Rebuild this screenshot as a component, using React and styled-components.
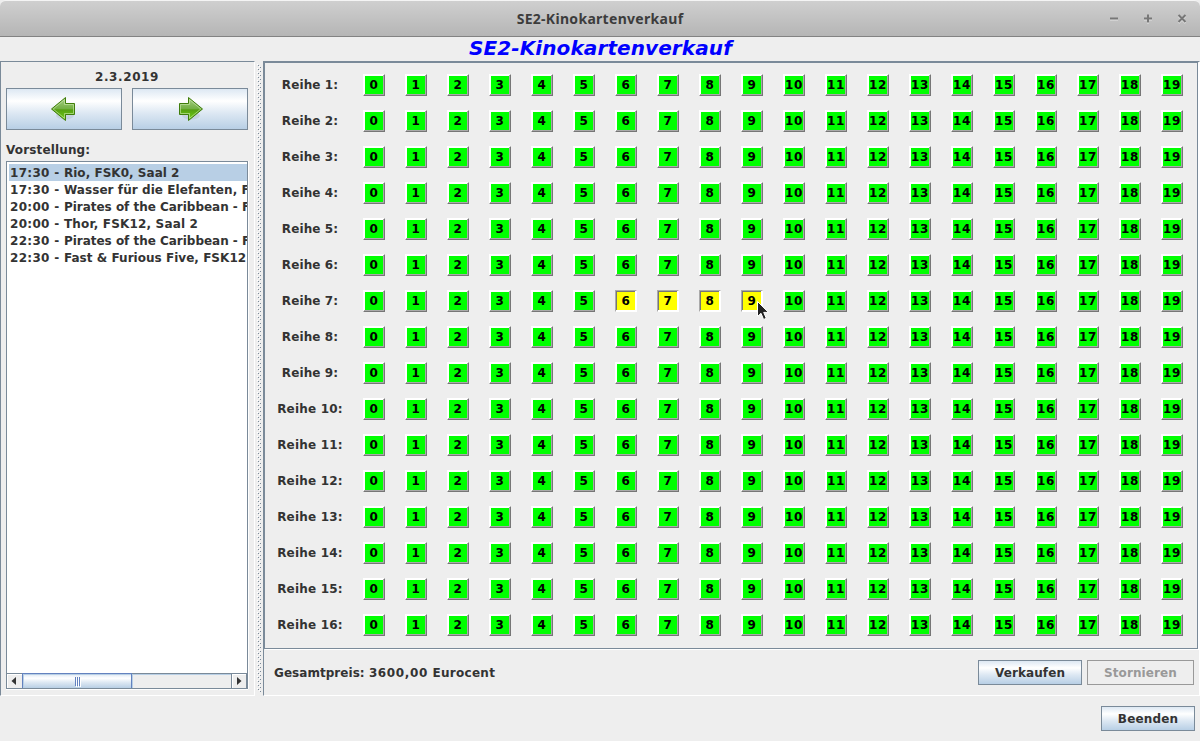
import React from 'react';
import styled, { createGlobalStyle, css } from 'styled-components';

const LINE = '#7a8a99';
const metal = 'linear-gradient(#dde8f3 0%, #ffffff 30%, #dde8f3 60%, #b8cfe5 100%)';
const dot = (color) => `conic-gradient(from 0deg at 1px 1px, transparent 75%, ${color} 0)`;

const Global = createGlobalStyle`
  * { box-sizing: border-box; }
  body {
    margin: 0;
    background: #eee;
    color: #333;
    font: bold 12px/14px "DejaVu Sans", Verdana, sans-serif;
    cursor: default;
  }
`;

const Window = styled.div`
  width: 1200px;
  height: 741px;
  display: flex;
  flex-direction: column;
  overflow: hidden;
  background: #eee;
`;

const TitleBar = styled.header`
  height: 37px;
  flex: none;
  display: grid;
  grid-template-columns: 110px 1fr 110px;
  align-items: center;
  background: linear-gradient(#cfcfcf, #b5b5b5);
  border-top: 1px solid #f4f4f4;
  border-bottom: 1px solid #828282;
  border-radius: 6px 6px 0 0;
`;

const WindowName = styled.div`
  grid-column: 2;
  text-align: center;
  font: bold 14px/20px "Noto Sans", "Open Sans", sans-serif;
  letter-spacing: 0.3px;
  color: #3c3c3c;
`;

const WindowControls = styled.div`
  display: flex;
  justify-content: flex-end;
  gap: 22px;
  padding-right: 12px;
`;

const Heading = styled.h1`
  margin: 0;
  height: 24px;
  flex: none;
  padding-left: 1px;
  text-align: center;
  font-size: 20px;
  line-height: 22px;
  letter-spacing: 0.1px;
  font-style: italic;
  color: #00f;
`;

const Split = styled.main`
  height: 635px;
  flex: none;
  display: grid;
  grid-template-columns: 255px 8px 937px;
`;

const SidePanel = styled.section`
  display: flex;
  flex-direction: column;
  border: 1px solid ${LINE};
  border-right-color: #fff;
  border-bottom-color: #fff;
  padding: 8px 6px 5px 5px;
`;

const DateLabel = styled.div`
  height: 18px;
  text-align: center;
  letter-spacing: 0.6px;
`;

const DayButtons = styled.div`
  display: grid;
  grid-template-columns: 116px 116px;
  gap: 10px;
`;

const Button = styled.button`
  display: flex;
  align-items: center;
  justify-content: center;
  width: ${(p) => p.$w}px;
  height: ${(p) => p.$h}px;
  padding: 0;
  font: inherit;
  letter-spacing: ${(p) => p.$track || 0}px;
  color: #333;
  background: ${metal};
  border: 1px solid ${LINE};
  &:disabled {
    color: #999;
    background: #eee;
    border-color: #999;
  }
`;

const ListLabel = styled.div`
  padding: 13px 0 4px;
  letter-spacing: 0.15px;
`;

const ListBox = styled.div`
  width: 242px;
  height: 528px;
  display: flex;
  flex-direction: column;
  border: 1px solid ${LINE};
  box-shadow: 0 1px #fff, 1px 0 #fff;
`;

const Shows = styled.ul`
  flex: 1;
  margin: 0;
  padding: 2px 0 0 2px;
  list-style: none;
  overflow: hidden;
  background: #fff;
`;

const Show = styled.li`
  height: 17px;
  padding-left: 1px;
  line-height: 19px;
  white-space: pre;
  letter-spacing: 0.3px;
  background: ${(p) => (p.$selected ? '#b8cfe5' : 'transparent')};
`;

const Tracked = styled.span`
  letter-spacing: ${(p) => p.$track}px;
`;

const ScrollBar = styled.div`
  height: 15px;
  flex: none;
  display: grid;
  grid-template-columns: 15px 110px 1fr 16px;
  border-top: 1px solid ${LINE};
  background: #eee;
`;

const ScrollArrow = styled.div`
  display: flex;
  align-items: center;
  justify-content: center;
  padding-right: ${(p) => (p.$end ? 0 : 2)}px;
  border-left: ${(p) => (p.$end ? `1px solid ${LINE}` : 'none')};
  border-right: ${(p) => (p.$end ? `1px solid ${LINE}` : 'none')};
  box-shadow: inset 1px 1px #fff;
`;

const Thumb = styled.div`
  display: flex;
  align-items: center;
  justify-content: center;
  gap: 1px;
  border: 1px solid #6382bf;
  border-bottom-width: 0;
  box-shadow: inset 1px 1px #b8cfe5;
  background: ${metal};
  margin-top: -1px;
`;

const Grip = styled.i`
  width: 1px;
  height: 9px;
  background: #6382bf;
  box-shadow: 1px 1px #fff;
`;

const Track = styled.div`
  box-shadow: inset 1px 1px #b8cfe5;
`;

const Divider = styled.div`
  margin: 3px 0 4px;
  padding: 0 2px;
  background: ${dot(LINE)} 3px 1px / 4px 4px, ${dot(LINE)} 1px 3px / 4px 4px,
    ${dot('#fff')} 2px 0 / 4px 4px, ${dot('#fff')} 0 2px / 4px 4px;
  background-clip: content-box;
`;

const SalePanel = styled.section`
  display: flex;
  flex-direction: column;
  border: 1px solid ${LINE};
  border-right-color: #fff;
  border-bottom-color: #fff;
`;

const Hall = styled.div`
  height: 587px;
  flex: none;
  width: 934px;
  display: flex;
  flex-direction: column;
  gap: 14px;
  padding: 11px 0 0 12px;
  border: 1px solid ${LINE};
  box-shadow: 1px 1px #fff;
`;

const Row = styled.div`
  display: grid;
  grid-template-columns: 66px repeat(20, 22px);
  column-gap: 20px;
  height: 22px;
  align-items: center;
`;

const RowLabel = styled.span`
  text-align: center;
  white-space: nowrap;
  letter-spacing: ${(p) => p.$track}px;
`;

const raised = css`
  border-color: #fff #767676 #767676 #fff;
  box-shadow: inset -1px -1px #aaa, inset 1px 1px #fff;
`;
const lowered = css`
  border-color: #aaa #fff #fff #aaa;
  box-shadow: inset -1px -1px #fff, inset 1px 1px #767676;
`;

const Seat = styled.button`
  width: 22px;
  height: 22px;
  padding: 0;
  display: flex;
  align-items: center;
  justify-content: center;
  font: inherit;
  letter-spacing: 0.6px;
  color: #000;
  background: ${(p) => (p.$chosen ? '#ff0' : '#0f0')};
  border: 1px solid;
  ${(p) => (p.$chosen ? lowered : raised)}
`;

const SaleBar = styled.div`
  flex: 1;
  display: flex;
  align-items: center;
  gap: 5px;
  padding: 1px 5px 0 10px;
`;

const Price = styled.div`
  flex: 1;
  letter-spacing: 0.04px;
`;

const Footer = styled.footer`
  flex: 1;
  display: flex;
  justify-content: flex-end;
  align-items: center;
  padding: 0 5px 0 0;
`;

const Pointer = styled.svg`
  position: absolute;
  left: 756px;
  top: 300px;
  pointer-events: none;
`;

const Arrow = ({ flip }) => (
  <svg width="28" height="28" viewBox="0 0 28 28">
    <defs>
      <linearGradient id="leaf" x1="0" y1="0" x2="0" y2="1">
        <stop offset="0" stopColor="#a9cf8a" />
        <stop offset=".48" stopColor="#74b044" />
        <stop offset=".54" stopColor="#55a010" />
        <stop offset="1" stopColor="#73d216" />
      </linearGradient>
    </defs>
    <ellipse cx="15" cy="20.5" rx="9" ry="4" fill="#000" opacity=".07" />
    <g transform={flip ? 'matrix(-1 0 0 1 28 0)' : undefined}>
      <path d="M1.5 14 L15.5 2.5 V8.5 H24.5 V19.5 H15.5 V25.5 Z" fill="url(#leaf)" stroke="#3f7d0a" strokeLinejoin="round" />
      <path d="M3.2 14 L14.5 4.7 V9.5 H23.5 V18.5 H14.5 V23.3 Z" fill="none" stroke="#c5e6a5" strokeOpacity=".65" />
    </g>
  </svg>
);

const shows = [
  ['17:30', 'Rio, FSK0, Saal 2', 0.03],
  ['17:30', 'Wasser für die Elefanten, F', 0.07],
  ['20:00', 'Pirates of the Caribbean - F', -0.02],
  ['20:00', 'Thor, FSK12, Saal 2', 0.17],
  ['22:30', 'Pirates of the Caribbean - F', -0.02],
  ['22:30', 'Fast & Furious Five, FSK12', 0.03],
];

const chosen = (row, seat) => row === 7 && seat >= 6 && seat <= 9;

export default function App() {
  return (
    <Window>
      <Global />
      <TitleBar>
        <WindowName>SE2-Kinokartenverkauf</WindowName>
        <WindowControls>
          {['M2 6.5H10', 'M2 6.5H10M6 2.5V10.5', 'M2.5 3L9.5 10M9.5 3L2.5 10'].map((d) => (
            <svg key={d} width="12" height="13" viewBox="0 0 12 13" fill="none" strokeWidth="2">
              <path d={d} stroke="#e2e2e2" transform="translate(0 1)" />
              <path d={d} stroke="#777" />
            </svg>
          ))}
        </WindowControls>
      </TitleBar>
      <Heading>SE2-Kinokartenverkauf</Heading>
      <Split>
        <SidePanel>
          <DateLabel>2.3.2019</DateLabel>
          <DayButtons>
            <Button $w={116} $h={42}><Arrow /></Button>
            <Button $w={116} $h={42}><Arrow flip /></Button>
          </DayButtons>
          <ListLabel>Vorstellung:</ListLabel>
          <ListBox>
            <Shows>
              {shows.map(([time, film, track], i) => (
                <Show key={i} $selected={i === 0}>
                  {`${time} - `}
                  <Tracked $track={track}>{film}</Tracked>
                </Show>
              ))}
            </Shows>
            <ScrollBar>
              <ScrollArrow>
                <svg width="5" height="8"><path d="M5 0V8L0.5 4Z" fill="#333" /></svg>
              </ScrollArrow>
              <Thumb><Grip /><Grip /><Grip /></Thumb>
              <Track />
              <ScrollArrow $end>
                <svg width="5" height="8"><path d="M0 0V8L4.5 4Z" fill="#333" /></svg>
              </ScrollArrow>
            </ScrollBar>
          </ListBox>
        </SidePanel>
        <Divider />
        <SalePanel>
          <Hall>
            {Array.from({ length: 16 }, (_, r) => (
              <Row key={r}>
                <RowLabel $track={r < 9 ? 0.1 : 0.2}>{`Reihe ${r + 1}:`}</RowLabel>
                {Array.from({ length: 20 }, (_, s) => (
                  <Seat key={s} $chosen={chosen(r + 1, s)}>{s}</Seat>
                ))}
              </Row>
            ))}
          </Hall>
          <SaleBar>
            <Price>
              {'Gesamtpreis: '}
              <Tracked $track={0.65}>3600,00</Tracked>
              <Tracked $track={0.27}>{' Eurocent'}</Tracked>
            </Price>
            <Button $w={104} $h={25} $track={0.1}>Verkaufen</Button>
            <Button $w={107} $h={25} $track={0.1} disabled>Stornieren</Button>
          </SaleBar>
        </SalePanel>
      </Split>
      <Footer>
        <Button $w={94} $h={25} $track={0.15}>Beenden</Button>
      </Footer>
      <Pointer width="14" height="22" viewBox="0 0 14 22">
        <path d="M1.5 1.5V16.5L5 13.3L7.6 19.5L10.3 18.3L7.7 12.4H12.5Z" fill="#222" stroke="#fff" />
      </Pointer>
    </Window>
  );
}
